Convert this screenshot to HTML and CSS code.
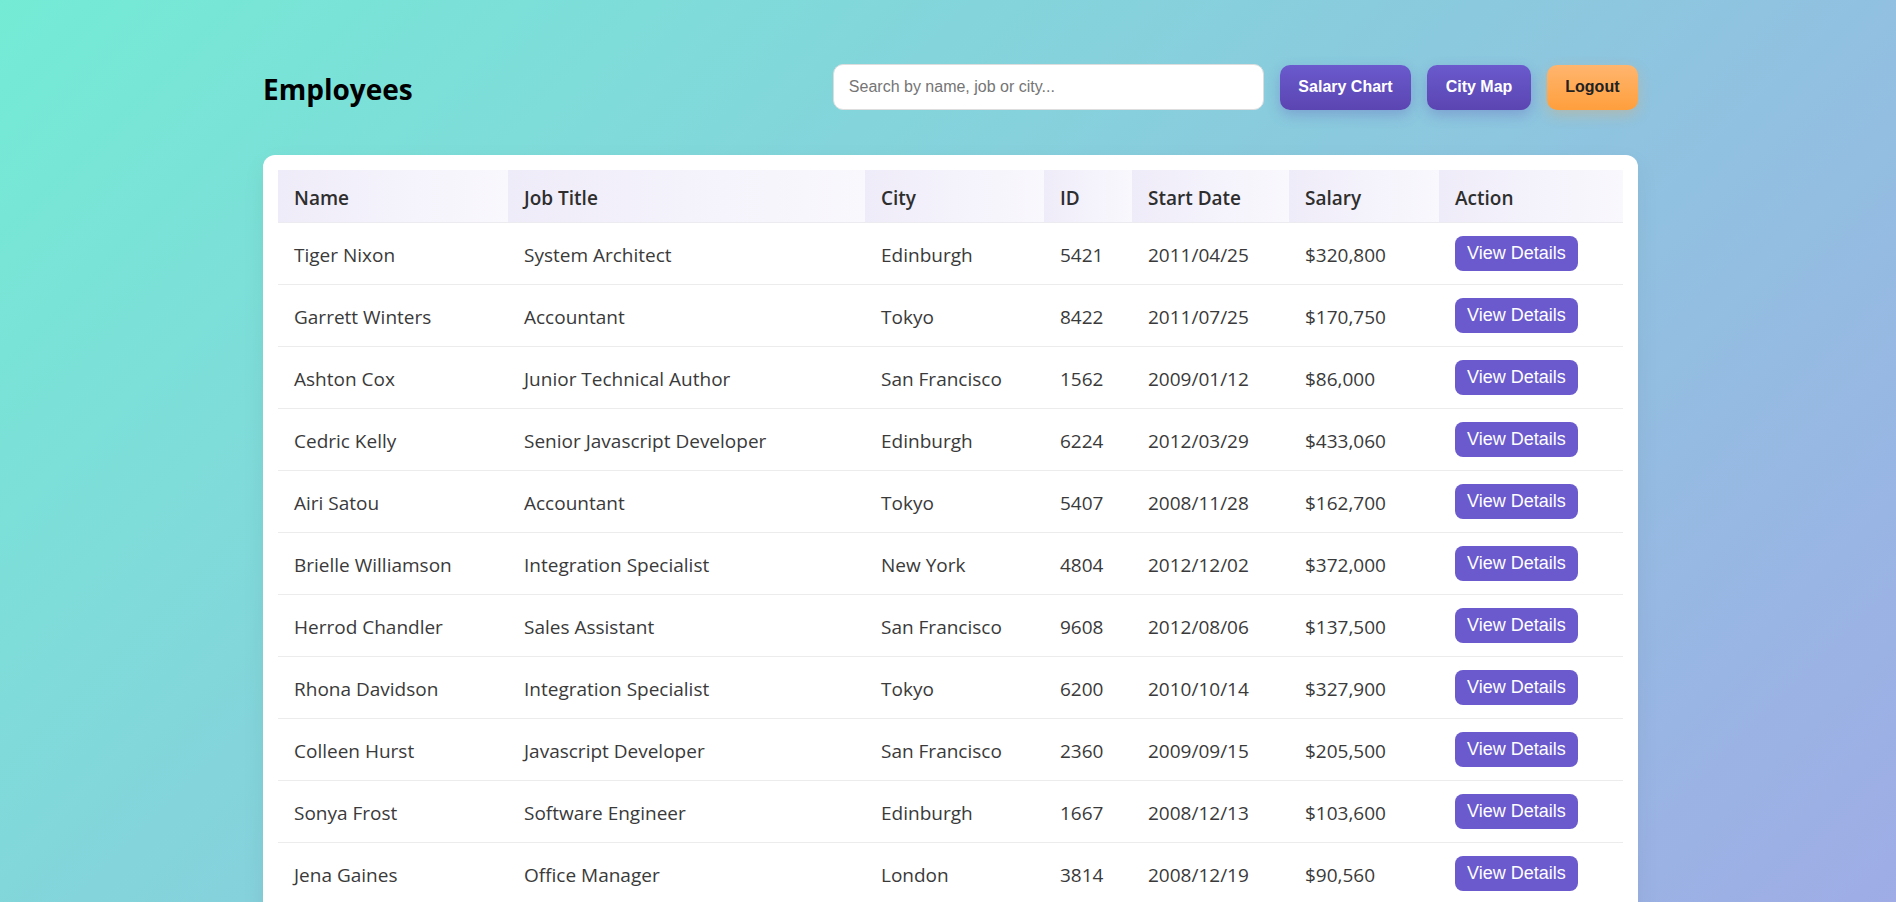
FILE: index.html
```html
<!DOCTYPE html>
<html lang="en">
<head>
<meta charset="utf-8">
<title>Employees</title>
<link rel="stylesheet" href="styles.css">
</head>
<body>
<div class="container">
  <header class="topbar">
    <h1 class="title">Employees</h1>
    <div class="tools">
      <input class="search" type="text" placeholder="Search by name, job or city...">
      <button class="btn btn-purple">Salary Chart</button>
      <button class="btn btn-purple">City Map</button>
      <button class="btn btn-orange">Logout</button>
    </div>
  </header>
  <div class="card">
    <table class="table">
      <colgroup>
        <col class="c-name"><col class="c-job"><col class="c-city"><col class="c-id"><col class="c-date"><col class="c-salary"><col class="c-action">
      </colgroup>
      <thead>
        <tr><th>Name</th><th>Job Title</th><th>City</th><th>ID</th><th>Start Date</th><th>Salary</th><th>Action</th></tr>
      </thead>
      <tbody>
        <tr><td>Tiger Nixon</td><td>System Architect</td><td>Edinburgh</td><td>5421</td><td>2011/04/25</td><td>$320,800</td><td class="act"><button class="view">View Details</button></td></tr>
        <tr><td>Garrett Winters</td><td>Accountant</td><td>Tokyo</td><td>8422</td><td>2011/07/25</td><td>$170,750</td><td class="act"><button class="view">View Details</button></td></tr>
        <tr><td>Ashton Cox</td><td>Junior Technical Author</td><td>San Francisco</td><td>1562</td><td>2009/01/12</td><td>$86,000</td><td class="act"><button class="view">View Details</button></td></tr>
        <tr><td>Cedric Kelly</td><td>Senior Javascript Developer</td><td>Edinburgh</td><td>6224</td><td>2012/03/29</td><td>$433,060</td><td class="act"><button class="view">View Details</button></td></tr>
        <tr><td>Airi Satou</td><td>Accountant</td><td>Tokyo</td><td>5407</td><td>2008/11/28</td><td>$162,700</td><td class="act"><button class="view">View Details</button></td></tr>
        <tr><td>Brielle Williamson</td><td>Integration Specialist</td><td>New York</td><td>4804</td><td>2012/12/02</td><td>$372,000</td><td class="act"><button class="view">View Details</button></td></tr>
        <tr><td>Herrod Chandler</td><td>Sales Assistant</td><td>San Francisco</td><td>9608</td><td>2012/08/06</td><td>$137,500</td><td class="act"><button class="view">View Details</button></td></tr>
        <tr><td>Rhona Davidson</td><td>Integration Specialist</td><td>Tokyo</td><td>6200</td><td>2010/10/14</td><td>$327,900</td><td class="act"><button class="view">View Details</button></td></tr>
        <tr><td>Colleen Hurst</td><td>Javascript Developer</td><td>San Francisco</td><td>2360</td><td>2009/09/15</td><td>$205,500</td><td class="act"><button class="view">View Details</button></td></tr>
        <tr><td>Sonya Frost</td><td>Software Engineer</td><td>Edinburgh</td><td>1667</td><td>2008/12/13</td><td>$103,600</td><td class="act"><button class="view">View Details</button></td></tr>
        <tr><td>Jena Gaines</td><td>Office Manager</td><td>London</td><td>3814</td><td>2008/12/19</td><td>$90,560</td><td class="act"><button class="view">View Details</button></td></tr>
      </tbody>
    </table>
  </div>
</div>
</body>
</html>
```

FILE: styles.css
```css
* { box-sizing: border-box; }

html, body { margin: 0; padding: 0; }

body {
  min-height: 100vh;
  padding-left: 5px;
  background: linear-gradient(135deg, #74ebd5 0%, #9face6 100%) fixed;
  font-family: "Open Sans", "Noto Sans", sans-serif;
  color: #333;
}

.container {
  width: 1375px;
  margin: 0 auto;
  padding-top: 64px;
}

.topbar {
  display: flex;
  align-items: center;
  justify-content: space-between;
  height: 46px;
  margin-bottom: 45px;
}

.title {
  margin: 0;
  padding-top: 3px;
  font-size: 28px;
  font-weight: 700;
  color: #000;
}

.tools {
  display: flex;
  align-items: center;
  gap: 16px;
}

.search {
  width: 431px;
  height: 46px;
  padding: 0 15px;
  border: 1px solid #ddd;
  border-radius: 10px;
  background: #fff;
  font-family: "Liberation Sans", Arial, sans-serif;
  font-size: 16px;
  color: #333;
  outline: none;
}

.search::placeholder { color: #757575; }

.btn {
  height: 45px;
  padding: 0 18.5px;
  border: none;
  border-radius: 10px;
  font-family: "Liberation Sans", Arial, sans-serif;
  font-size: 16px;
  font-weight: 700;
  cursor: pointer;
}

.btn-purple {
  color: #fff;
  background: linear-gradient(180deg, #6a5acd 0%, #5b45b2 100%);
  box-shadow: 0 5px 14px rgba(90, 70, 180, 0.3);
}

.btn-orange {
  color: #222;
  background: linear-gradient(180deg, #ffb56e 0%, #ff9f3d 100%);
  box-shadow: 0 5px 14px rgba(255, 160, 70, 0.3);
}

.card {
  background: #fff;
  border-radius: 12px;
  padding: 15px;
  box-shadow: 0 8px 24px rgba(0, 0, 0, 0.06);
}

.table {
  width: 100%;
  border-collapse: collapse;
  table-layout: fixed;
  font-size: 19px;
}

.c-name { width: 230px; }
.c-job { width: 357px; }
.c-city { width: 179px; }
.c-id { width: 88px; }
.c-date { width: 157px; }
.c-salary { width: 150px; }
.c-action { width: 184px; }

.table th {
  height: 52px;
  padding: 4px 16px 0;
  text-align: left;
  font-weight: 600;
  color: #2e2e2e;
  background: linear-gradient(90deg, #efecf9 0%, #f9f8fd 100%);
  border-bottom: 1px solid #ececf0;
}

.table td {
  height: 62px;
  padding: 3px 16px 0;
  color: #3a3a3a;
  border-bottom: 1px solid #ececec;
  white-space: nowrap;
}

.table td.act {
  padding-top: 0;
}

.view {
  height: 35px;
  padding: 0 12px;
  border: none;
  border-radius: 8px;
  background: #6a5acd;
  color: #fff;
  font-family: "Liberation Sans", Arial, sans-serif;
  font-size: 18px;
  cursor: pointer;
}
```
